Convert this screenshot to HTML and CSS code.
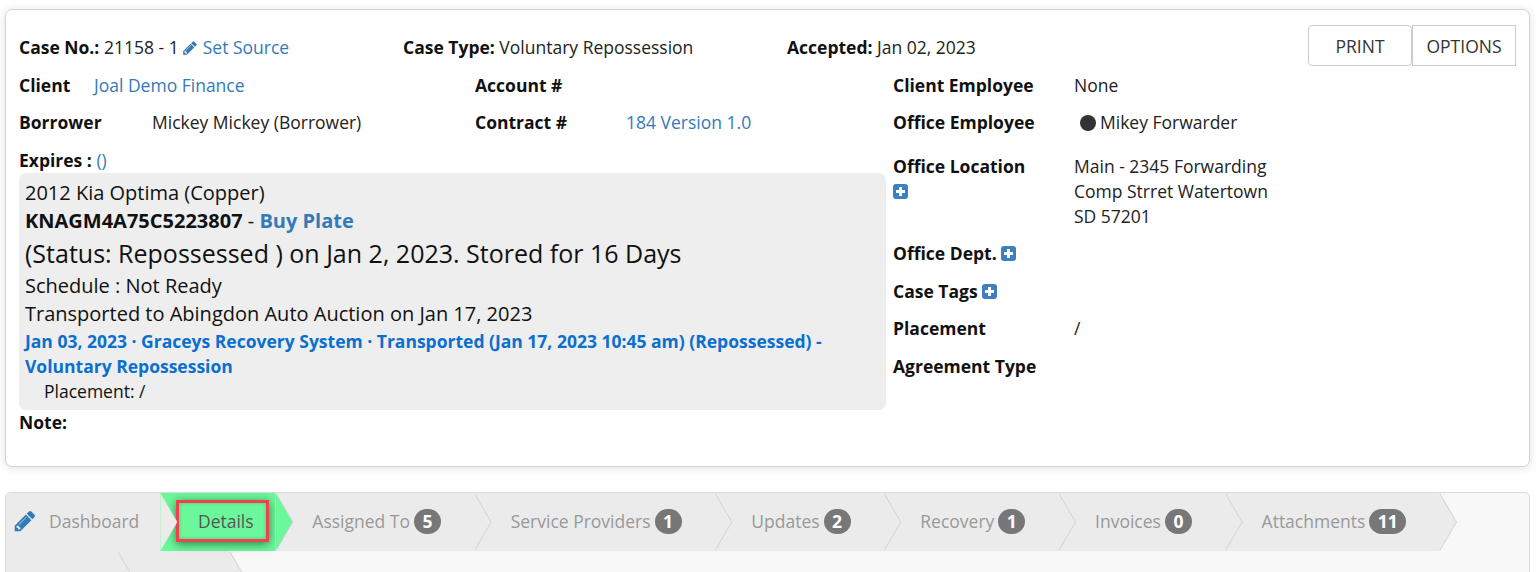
FILE: index.html
```html
<!DOCTYPE html>
<html lang="en">
<head>
<meta charset="utf-8">
<title>Case 21158 - 1</title>
<link rel="stylesheet" href="styles.css">
</head>
<body>
<section class="card">
  <header class="top">
    <div class="top-col"><b>Case No.:</b> 21158 - 1 <a href="#"><svg class="pen-sm" viewBox="0 0 1792 1792"><path d="M491 1536l91-91-235-235-91 91v107h128v128h107zm523-928q0-22-22-22-10 0-17 7l-542 542q-7 7-7 17 0 22 22 22 10 0 17-7l542-542q7-7 7-17zm-54-192l416 416-832 832h-416v-416zm683 96q0 53-37 90l-166 166-416-416 166-165q36-38 90-38 53 0 91 38l235 234q37 39 37 91z"/></svg> Set Source</a></div>
    <div class="top-col"><b>Case Type:</b> Voluntary Repossession</div>
    <div class="top-col"><b>Accepted:</b> Jan 02, 2023</div>
    <div class="actions"><button class="btn btn-first">PRINT</button><button class="btn">OPTIONS</button></div>
  </header>
  <div class="main">
    <div class="left">
      <div class="row">
        <div class="half"><b class="lbl-client">Client</b><a href="#">Joal Demo Finance</a></div>
        <div class="half2"><b>Account #</b></div>
      </div>
      <div class="row row-b">
        <div class="half"><b class="lbl-borrower">Borrower</b><span>Mickey Mickey (Borrower)</span></div>
        <div class="half2"><b class="lbl-contract">Contract #</b><a href="#">184 Version 1.0</a></div>
      </div>
      <div class="expires"><b>Expires :</b> <a href="#">()</a></div>
      <div class="vehicle">
        <div class="v-line">2012 Kia Optima (Copper)</div>
        <div class="v-line"><b>KNAGM4A75C5223807</b> - <a href="#" class="strong">Buy Plate</a></div>
        <div class="v-status">(Status: Repossessed ) on Jan 2, 2023. Stored for 16 Days</div>
        <div class="v-line">Schedule : Not Ready</div>
        <div class="v-line">Transported to Abingdon Auto Auction on Jan 17, 2023</div>
        <a href="#" class="v-link">Jan 03, 2023 · Graceys Recovery System · Transported (Jan 17, 2023 10:45 am) (Repossessed) - Voluntary Repossession</a>
        <div class="v-place">Placement: /</div>
      </div>
      <div class="note"><b>Note:</b></div>
    </div>
    <div class="right">
      <div class="info i1"><b>Client Employee</b><span>None</span></div>
      <div class="info i2"><b>Office Employee</b><span class="emp"><i class="dot"></i>Mikey Forwarder</span></div>
      <div class="info i3"><div><b>Office Location</b><br><svg class="plus" viewBox="0 0 15 15"><rect width="15" height="15" rx="3"/><path d="M6 3h3v3h3v3H9v3H6V9H3V6h3z"/></svg></div><span>Main - 2345 Forwarding<br>Comp Strret Watertown<br>SD 57201</span></div>
      <div class="info i4"><div><b>Office Dept.</b> <svg class="plus" viewBox="0 0 15 15"><rect width="15" height="15" rx="3"/><path d="M6 3h3v3h3v3H9v3H6V9H3V6h3z"/></svg></div></div>
      <div class="info i5"><div><b>Case Tags</b> <svg class="plus" viewBox="0 0 15 15"><rect width="15" height="15" rx="3"/><path d="M6 3h3v3h3v3H9v3H6V9H3V6h3z"/></svg></div></div>
      <div class="info i6"><b>Placement</b><span>/</span></div>
      <div class="info i7"><b>Agreement Type</b></div>
    </div>
  </div>
</section>
<nav class="tabs">
  <a class="tab tab-dash" href="#"><svg class="pen-lg" viewBox="0 0 1792 1792"><path d="M491 1536l91-91-235-235-91 91v107h128v128h107zm523-928q0-22-22-22-10 0-17 7l-542 542q-7 7-7 17 0 22 22 22 10 0 17-7l542-542q7-7 7-17zm-54-192l416 416-832 832h-416v-416zm683 96q0 53-37 90l-166 166-416-416 166-165q36-38 90-38 53 0 91 38l235 234q37 39 37 91z"/></svg>Dashboard</a>
  <a class="tab tab-active" href="#"><span class="hl">Details</span></a>
  <a class="tab" href="#">Assigned To <span class="badge">5</span></a>
  <a class="tab" href="#">Service Providers <span class="badge">1</span></a>
  <a class="tab" href="#">Updates <span class="badge">2</span></a>
  <a class="tab" href="#">Recovery <span class="badge">1</span></a>
  <a class="tab" href="#">Invoices <span class="badge">0</span></a>
  <a class="tab" href="#">Attachments <span class="badge">11</span></a>
  <a class="tab tab-blank tab-b1" href="#"></a>
  <a class="tab tab-blank" href="#"></a>
</nav>
</body>
</html>
```
FILE: styles.css
```css
* { box-sizing: border-box; }
html, body { height: 100%; }
body {
  margin: 0;
  padding: 9px 6px 0 5px;
  overflow: hidden;
  background: #fff;
  color: #222;
  font: 17.5px/25px "Open Sans", sans-serif;
}
a { color: #337ab7; text-decoration: none; }
b { color: #111; font-weight: 700; }

.card {
  height: 458px;
  padding: 15px 13px 0 13px;
  background: #fff;
  border: 1px solid #d4d4d4;
  border-radius: 7px;
  box-shadow: 0 1px 10px rgba(0, 0, 0, .12);
}
.top { display: flex; height: 44px; }
.top-col { width: 384px; padding-top: 10px; white-space: nowrap; }
.pen-sm { width: 16px; height: 16px; margin-left: -1px; fill: #337ab7; vertical-align: -2px; }
.actions { display: flex; margin-left: auto; }
.btn {
  width: 104px;
  height: 41px;
  padding: 0;
  background: #fff;
  border: 1px solid #ccc;
  color: #333;
  font: 17.5px "Open Sans", sans-serif;
}
.btn-first { border-radius: 4px; }

.main { display: flex; }
.left { width: 874px; }
.row { display: flex; height: 25px; margin-top: 4px; }
.row-b { margin-top: 12px; }
.half { width: 456px; display: flex; }
.half2 { display: flex; }
.lbl-client { width: 75px; }
.lbl-borrower { width: 133px; }
.lbl-contract { width: 151px; }
.expires { margin-top: 13px; height: 25px; }
.vehicle {
  width: 867px;
  padding: 6px 6px 6px;
  background: #eee;
  border-radius: 7px;
  color: #111;
  font-size: 20px;
}
.v-line { line-height: 28px; }
.v-status { margin: 1px 0 2px; font-size: 25px; line-height: 34px; }
.strong { font-weight: 700; }
.v-link { display: block; padding-top: 1px; color: #0b6fd0; font-size: 17.5px; font-weight: 700; line-height: 25px; }
.v-place { padding-left: 19px; font-size: 17.5px; line-height: 25px; }
.note { margin-top: 0; }

.info { display: flex; }
.info > b, .info > div { width: 181px; flex: none; }
.i1 { margin-top: 4px; }
.i2 { margin-top: 12px; }
.i3 { margin-top: 19px; }
.i4 { margin-top: 12px; }
.i5 { margin-top: 13px; }
.i6 { margin-top: 12px; }
.i7 { margin-top: 13px; }
.emp { display: flex; align-items: center; padding-left: 6px; }
.dot { width: 16px; height: 16px; margin-right: 4px; border-radius: 50%; background: #333; }
.plus { width: 15px; height: 15px; vertical-align: -1px; fill: #3d7fbf; }
.plus path { fill: #fff; }

.tabs {
  display: flex;
  flex-wrap: wrap;
  align-content: flex-start;
  margin-top: 25px;
  height: 120px;
  background: #f8f8f8;
  border: 1px solid #d9d9d9;
  border-radius: 5px;
}
.tab {
  position: relative;
  display: flex;
  align-items: center;
  gap: 4px;
  height: 58px;
  padding: 0 32.7px 2px 37px;
  background: #ebebeb;
  color: #999;
  white-space: nowrap;
}
.tab::before, .tab::after {
  content: "";
  position: absolute;
  top: 0;
  width: 17px;
  height: 100%;
  clip-path: polygon(0 0, 100% 50%, 0 100%);
}
.tab::before { left: calc(100% + 1px); background: #d2d2d2; }
.tab::after { left: 100%; background: #ebebeb; }
.tab:nth-child(1) { z-index: 10; }
.tab:nth-child(2) { z-index: 9; }
.tab:nth-child(3) { z-index: 8; }
.tab:nth-child(4) { z-index: 7; }
.tab:nth-child(5) { z-index: 6; }
.tab:nth-child(6) { z-index: 5; }
.tab:nth-child(7) { z-index: 4; }
.tab:nth-child(8) { z-index: 3; }
.tab:nth-child(9) { z-index: 2; }
.tab:nth-child(10) { z-index: 1; }
.tab-dash { padding: 0 21px 2px 7px; border-top-left-radius: 4px; }
.pen-lg { width: 24px; height: 24px; margin-right: 8px; fill: #337ab7; }
.tab-dash::before { display: none; }
.tab-active { padding: 0 6px 2px 16px; background: #6bf89b; color: #555; }
.tab-active::after { background: #6bf89b; }
.hl {
  display: flex;
  align-items: center;
  justify-content: center;
  width: 93px;
  height: 42px;
  padding-left: 6px;
  border: 3px solid #f0424a;
  box-shadow: 0 2px 9px rgba(0, 0, 0, .5), inset 0 0 4px rgba(0, 0, 0, .2);
}
.tab-blank { width: 112px; padding: 0; }
.tab-b1 { width: 111px; }
.badge {
  min-width: 27px;
  height: 25px;
  padding: 0 8.5px;
  border-radius: 13px;
  background: #777;
  color: #fff;
  font-weight: 700;
  line-height: 25px;
  text-align: center;
}
```
